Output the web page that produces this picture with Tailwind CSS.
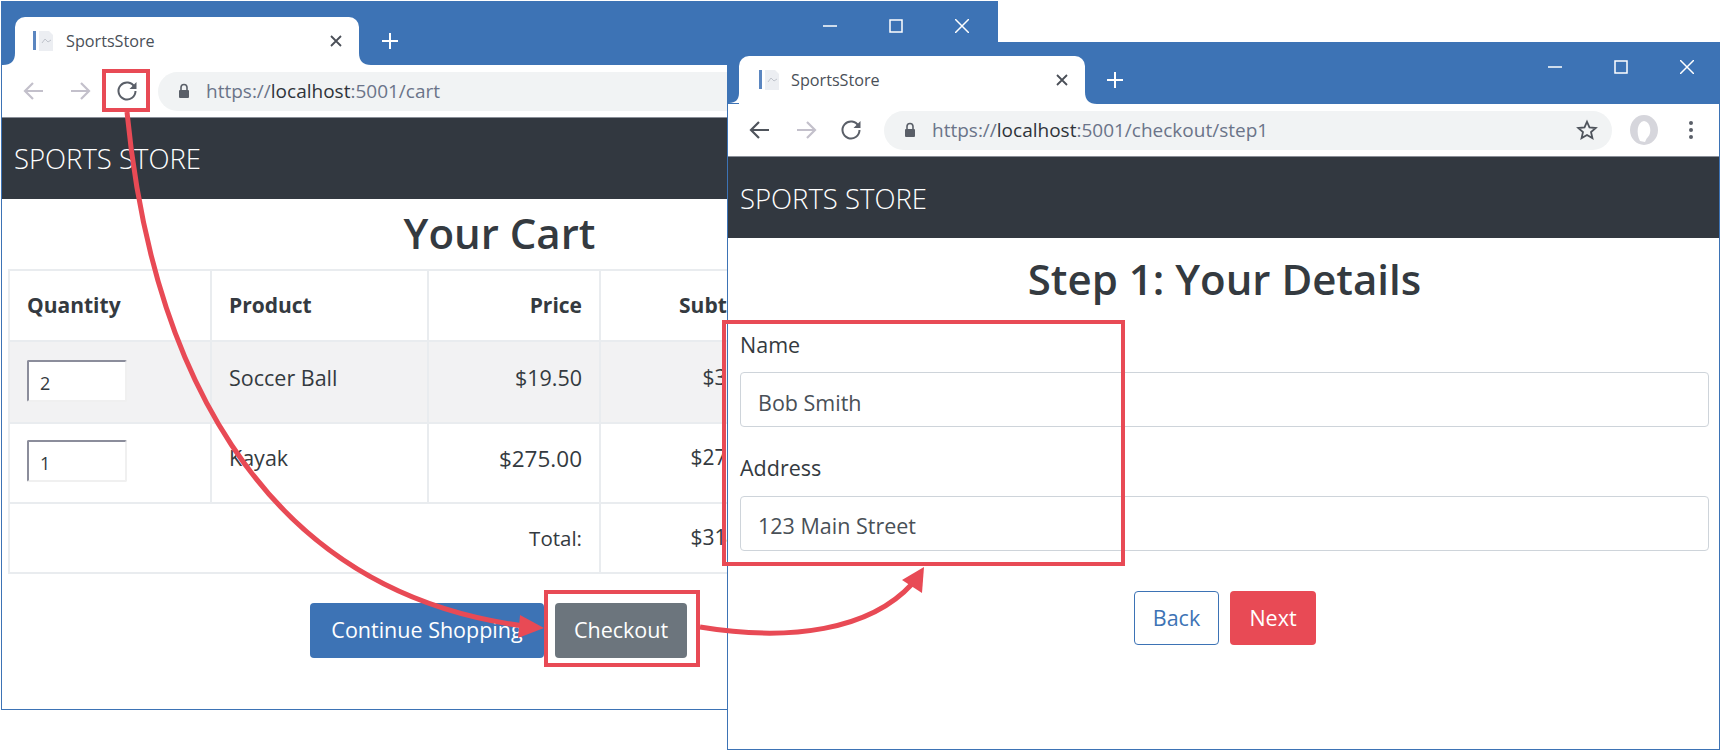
<!DOCTYPE html>
<html>
<head>
<meta charset="utf-8">
<script src="https://cdn.jsdelivr.net/npm/@tailwindcss/browser@4"></script>
</head>
<body class="bg-white">
<div class="relative w-[1725px] h-[753px] overflow-hidden bg-white font-['Open_Sans',sans-serif] text-[#343a40]">

  <!-- Left window -->
  <section class="absolute left-[1px] top-[1px] w-[997px] h-[709px] flex flex-col border border-[#3d73b5] bg-white">
    <div class="h-[63px] shrink-0 bg-[#3d73b5] flex items-end pl-[13px] relative">
      <div class="relative w-[344px] h-[48px] bg-white rounded-t-[10px] flex items-center pl-[18px] pr-[17px] gap-[11px]">
        <svg class="absolute left-[-12px] bottom-0" width="12" height="12" viewBox="0 0 12 12"><path d="M12 0V12H0C8 12 12 8 12 0Z" fill="#fff"/></svg>
        <svg class="absolute right-[-12px] bottom-0" width="12" height="12" viewBox="0 0 12 12"><path d="M0 0V12H12C4 12 0 8 0 0Z" fill="#fff"/></svg>
        <svg width="22" height="22" viewBox="0 0 22 22"><path d="M6 1h10l4 4v16H6z" fill="#eceef2"/><path d="M1.500 1v19" stroke="#5b86c0" stroke-width="3"/><path d="M9 13l3-4 3 3 3-2" fill="none" stroke="#c0c4cc"/></svg>
        <span class="text-[16.200px] text-[#4a5058] leading-none">SportsStore</span>
        <svg class="ml-auto" width="12" height="12" viewBox="0 0 12 12"><path d="M1 1l10 10M11 1L1 11" stroke="#4a4f57" stroke-width="1.800"/></svg>
      </div>
      <svg class="ml-[23px] mb-[16px]" width="16" height="16" viewBox="0 0 16 16"><path d="M8 0v16M0 8h16" stroke="#fff" stroke-width="2"/></svg>
      <div class="ml-auto flex self-start items-center mt-[17px] mr-[28px] gap-[52px]">
        <svg width="14" height="14" viewBox="0 0 14 14"><path d="M0 7h14" stroke="#fff" stroke-width="1.500"/></svg>
        <svg width="14" height="14" viewBox="0 0 14 14"><rect x="1" y="1" width="12" height="12" fill="none" stroke="#fff" stroke-width="1.500"/></svg>
        <svg width="14" height="14" viewBox="0 0 14 14"><path d="M0 0l14 14M14 0L0 14" stroke="#fff" stroke-width="1.500"/></svg>
      </div>
    </div>
    <div class="h-[53px] shrink-0 bg-white flex items-center pl-[21px] border-b border-[#8a8f98]">
      <svg width="22" height="22" viewBox="0 0 22 22"><path d="M20 11H3M10 3l-8 8 8 8" fill="none" stroke="#c3c0cb" stroke-width="2.200"/></svg>
      <svg class="ml-[24px]" width="22" height="22" viewBox="0 0 22 22"><path d="M2 11h17M12 3l8 8-8 8" fill="none" stroke="#c3c0cb" stroke-width="2.200"/></svg>
      <svg class="ml-[25px]" width="22" height="22" viewBox="0 0 22 22"><path d="M18.500 7A8.500 8.500 0 1 0 19.500 11" fill="none" stroke="#5a5f68" stroke-width="2"/><path d="M20.500 2v7h-7z" fill="#5a5f68"/></svg>
      <div class="ml-[20px] flex-1 h-[39px] rounded-l-full bg-[#f1f3f4] flex items-center pl-[19px] gap-[15px]">
        <svg width="14" height="16" viewBox="0 0 14 16"><path d="M4 7V4.500a3 3 0 0 1 6 0V7" fill="none" stroke="#5a5f68" stroke-width="1.600"/><rect x="2" y="7" width="10" height="8" rx="1" fill="#5a5f68"/></svg>
        <span class="text-[19px] text-[#6b7489] leading-none whitespace-nowrap">https://<span class="text-[#2f343a]">localhost</span>:5001/cart</span>
      </div>
    </div>
    <div class="h-[81px] shrink-0 bg-[#323840] flex items-center pl-[12px]">
      <span class="text-[27.500px] font-light text-white leading-none">SPORTS STORE</span>
    </div>
    <div class="flex-1 px-[6px] flex flex-col text-[21.500px]">
      <h1 class="h-[70px] pb-[2px] flex items-center justify-center text-[42px] font-semibold leading-none">Your Cart</h1>
      <table class="table-fixed border-collapse w-[980px]">
        <colgroup><col class="w-[202px]"><col class="w-[217px]"><col class="w-[172px]"><col class="w-[186px]"><col></colgroup>
        <thead>
          <tr class="h-[71px]">
            <th class="border-2 border-[#e9ecef] text-left px-[17px] font-bold text-[21px]">Quantity</th>
            <th class="border-2 border-[#e9ecef] text-left px-[17px] font-bold text-[21px]">Product</th>
            <th class="border-2 border-[#e9ecef] text-right px-[17px] font-bold text-[21px]">Price</th>
            <th class="border-2 border-[#e9ecef] text-right px-[17px] font-bold text-[21px]">Subtotal</th>
            <th class="border-2 border-[#e9ecef]"></th>
          </tr>
        </thead>
        <tbody>
          <tr class="h-[82px] bg-[#f2f2f3]">
            <td class="border-2 border-[#e9ecef] align-top px-[17px] pt-[18px]"><input value="2" class="block w-[100px] h-[42px] bg-white pl-[11px] pt-[3px] border-2 border-t-[#8b8d9b] border-l-[#8b8d9b] border-r-[#f0f0f0] border-b-[#f0f0f0] rounded-[2px] text-[18px]"></td>
            <td class="border-2 border-[#e9ecef] align-top px-[17px] pt-[20px]">Soccer Ball</td>
            <td class="border-2 border-[#e9ecef] align-top px-[17px] pt-[20px] text-right">$19.50</td>
            <td class="border-2 border-[#e9ecef] align-top px-[17px] pt-[20px] text-right text-[21px]">$39.00</td>
            <td class="border-2 border-[#e9ecef]"></td>
          </tr>
          <tr class="h-[80px]">
            <td class="border-2 border-[#e9ecef] align-top px-[17px] pt-[16px]"><input value="1" class="block w-[100px] h-[42px] bg-white pl-[11px] pt-[3px] border-2 border-t-[#8b8d9b] border-l-[#8b8d9b] border-r-[#f0f0f0] border-b-[#f0f0f0] rounded-[2px] text-[18px]"></td>
            <td class="border-2 border-[#e9ecef] align-top px-[17px] pt-[18px]">Kayak</td>
            <td class="border-2 border-[#e9ecef] align-top px-[17px] pt-[18px] text-right text-[22.500px]">$275.00</td>
            <td class="border-2 border-[#e9ecef] align-top px-[17px] pt-[18px] text-right text-[21px]">$275.00</td>
            <td class="border-2 border-[#e9ecef]"></td>
          </tr>
          <tr class="h-[70px]">
            <td colspan="3" class="border-2 border-[#e9ecef] px-[17px] text-right text-[20.500px]">Total:</td>
            <td class="border-2 border-[#e9ecef] px-[17px] text-right text-[21px]">$314.00</td>
            <td class="border-2 border-[#e9ecef]"></td>
          </tr>
        </tbody>
      </table>
      <div class="mt-[29px] pr-[2px] flex justify-center gap-[11px] text-white">
        <button class="w-[234px] h-[55px] bg-[#3d73b5] rounded-[4px]">Continue Shopping</button>
        <button class="w-[132px] h-[55px] bg-[#6c757d] rounded-[4px]">Checkout</button>
      </div>
    </div>
  </section>

  <!-- Right window -->
  <section class="absolute left-[727px] top-[42px] w-[993px] h-[708px] flex flex-col border border-[#3d73b5] bg-white">
    <div class="h-[61px] shrink-0 bg-[#3d73b5] flex items-end pl-[11px] relative">
      <div class="relative w-[346px] h-[48px] bg-white rounded-t-[10px] flex items-center pl-[20px] pr-[17px] gap-[10px]">
        <svg class="absolute left-[-10px] bottom-0" width="10" height="12" viewBox="0 0 12 12"><path d="M12 0V12H0C8 12 12 8 12 0Z" fill="#fff"/></svg>
        <svg class="absolute right-[-12px] bottom-0" width="12" height="12" viewBox="0 0 12 12"><path d="M0 0V12H12C4 12 0 8 0 0Z" fill="#fff"/></svg>
        <svg width="22" height="22" viewBox="0 0 22 22"><path d="M6 1h10l4 4v16H6z" fill="#eceef2"/><path d="M1.500 1v19" stroke="#5b86c0" stroke-width="3"/><path d="M9 13l3-4 3 3 3-2" fill="none" stroke="#c0c4cc"/></svg>
        <span class="text-[16.200px] text-[#4a5058] leading-none">SportsStore</span>
        <svg class="ml-auto" width="12" height="12" viewBox="0 0 12 12"><path d="M1 1l10 10M11 1L1 11" stroke="#4a4f57" stroke-width="1.800"/></svg>
      </div>
      <svg class="ml-[22px] mb-[16px]" width="16" height="16" viewBox="0 0 16 16"><path d="M8 0v16M0 8h16" stroke="#fff" stroke-width="2"/></svg>
      <div class="ml-auto flex self-start items-center mt-[17px] mr-[25px] gap-[52px]">
        <svg width="14" height="14" viewBox="0 0 14 14"><path d="M0 7h14" stroke="#fff" stroke-width="1.500"/></svg>
        <svg width="14" height="14" viewBox="0 0 14 14"><rect x="1" y="1" width="12" height="12" fill="none" stroke="#fff" stroke-width="1.500"/></svg>
        <svg width="14" height="14" viewBox="0 0 14 14"><path d="M0 0l14 14M14 0L0 14" stroke="#fff" stroke-width="1.500"/></svg>
      </div>
    </div>
    <div class="h-[53px] shrink-0 bg-white flex items-center pl-[21px] border-b border-[#8a8f98]">
      <svg width="22" height="22" viewBox="0 0 22 22"><path d="M20 11H3M10 3l-8 8 8 8" fill="none" stroke="#4f545c" stroke-width="2.200"/></svg>
      <svg class="ml-[24px]" width="22" height="22" viewBox="0 0 22 22"><path d="M2 11h17M12 3l8 8-8 8" fill="none" stroke="#c3c0cb" stroke-width="2.200"/></svg>
      <svg class="ml-[23px]" width="22" height="22" viewBox="0 0 22 22"><path d="M18.500 7A8.500 8.500 0 1 0 19.500 11" fill="none" stroke="#5a5f68" stroke-width="2"/><path d="M20.500 2v7h-7z" fill="#5a5f68"/></svg>
      <div class="ml-[22px] w-[728px] h-[39px] rounded-full bg-[#f1f3f4] flex items-center pl-[19px] pr-[14px] gap-[15px]">
        <svg width="14" height="16" viewBox="0 0 14 16"><path d="M4 7V4.500a3 3 0 0 1 6 0V7" fill="none" stroke="#5a5f68" stroke-width="1.600"/><rect x="2" y="7" width="10" height="8" rx="1" fill="#5a5f68"/></svg>
        <span class="text-[19px] text-[#6b7489] leading-none whitespace-nowrap">https://<span class="text-[#2f343a]">localhost</span>:5001/checkout/step1</span>
        <svg class="ml-auto" width="22" height="22" viewBox="0 0 24 24"><path d="M12 3l2.700 6.200 6.800.6-5.100 4.500 1.500 6.600L12 17.400l-5.900 3.500 1.500-6.600-5.100-4.500 6.800-.6z" fill="none" stroke="#4f545c" stroke-width="2"/></svg>
      </div>
      <svg class="ml-[17px]" width="30" height="30" viewBox="0 0 30 30"><ellipse cx="15" cy="15" rx="14" ry="15" fill="#d6d6dc"/><path d="M11 26C7 18 8 7 15 6c7 1 8 12 4 16-2 2-2 3-3 5z" fill="#fff"/></svg>
      <svg class="ml-[29px]" width="6" height="22" viewBox="0 0 6 22"><circle cx="3" cy="4" r="2" fill="#5a5f68"/><circle cx="3" cy="11" r="2" fill="#5a5f68"/><circle cx="3" cy="18" r="2" fill="#5a5f68"/></svg>
    </div>
    <div class="h-[81px] shrink-0 bg-[#323840] flex items-center pl-[12px] pt-[2px]">
      <span class="text-[27.500px] font-light text-white leading-none">SPORTS STORE</span>
    </div>
    <div class="flex-1 pl-[12px] pr-[10px] flex flex-col text-[21.500px]">
      <h1 class="h-[84px] pb-[2px] flex items-center justify-center text-[42px] font-semibold leading-none">Step 1: Your Details</h1>
      <label class="mt-[10px] h-[27px] leading-[25px]">Name</label>
      <input value="Bob Smith" class="mt-[13px] w-full h-[55px] px-[17px] pt-[6px] border border-[#ced4da] rounded-[4px] text-[#495057]">
      <label class="mt-[28px] h-[27px] leading-[25px]">Address</label>
      <input value="123 Main Street" class="mt-[14px] w-full h-[55px] px-[17px] pt-[4px] border border-[#ced4da] rounded-[4px] text-[#495057]">
      <div class="mt-[40px] pl-[1px] flex justify-center gap-[11px]">
        <button class="w-[85px] h-[54px] bg-white text-[#3d73b5] border border-[#3d73b5] rounded-[4px]">Back</button>
        <button class="w-[86px] h-[54px] bg-[#e84a55] text-white rounded-[4px]">Next</button>
      </div>
    </div>
  </section>

  <!-- Callout frames -->
  <div class="absolute left-[102px] top-[69px] w-[48px] h-[43px] border-4 border-[#e84a55]"></div>
  <div class="absolute left-[544px] top-[590px] w-[156px] h-[77px] border-4 border-[#e84a55]"></div>
  <div class="absolute left-[722px] top-[320px] w-[403px] h-[246px] border-4 border-[#e84a55]"></div>

  <!-- Callout arrows -->
  <svg class="absolute left-0 top-0 pointer-events-none" width="1725" height="753" viewBox="0 0 1725 753">
    <path d="M127 112C150 350 250 590 524 626" fill="none" stroke="#e84a55" stroke-width="5"/>
    <path d="M544 628L520 615L518 638Z" fill="#e84a55"/>
    <path d="M700 627C790 642 870 630 912 584" fill="none" stroke="#e84a55" stroke-width="5"/>
    <path d="M924 567L902 580L922 593Z" fill="#e84a55"/>
  </svg>
</div>
</body>
</html>
